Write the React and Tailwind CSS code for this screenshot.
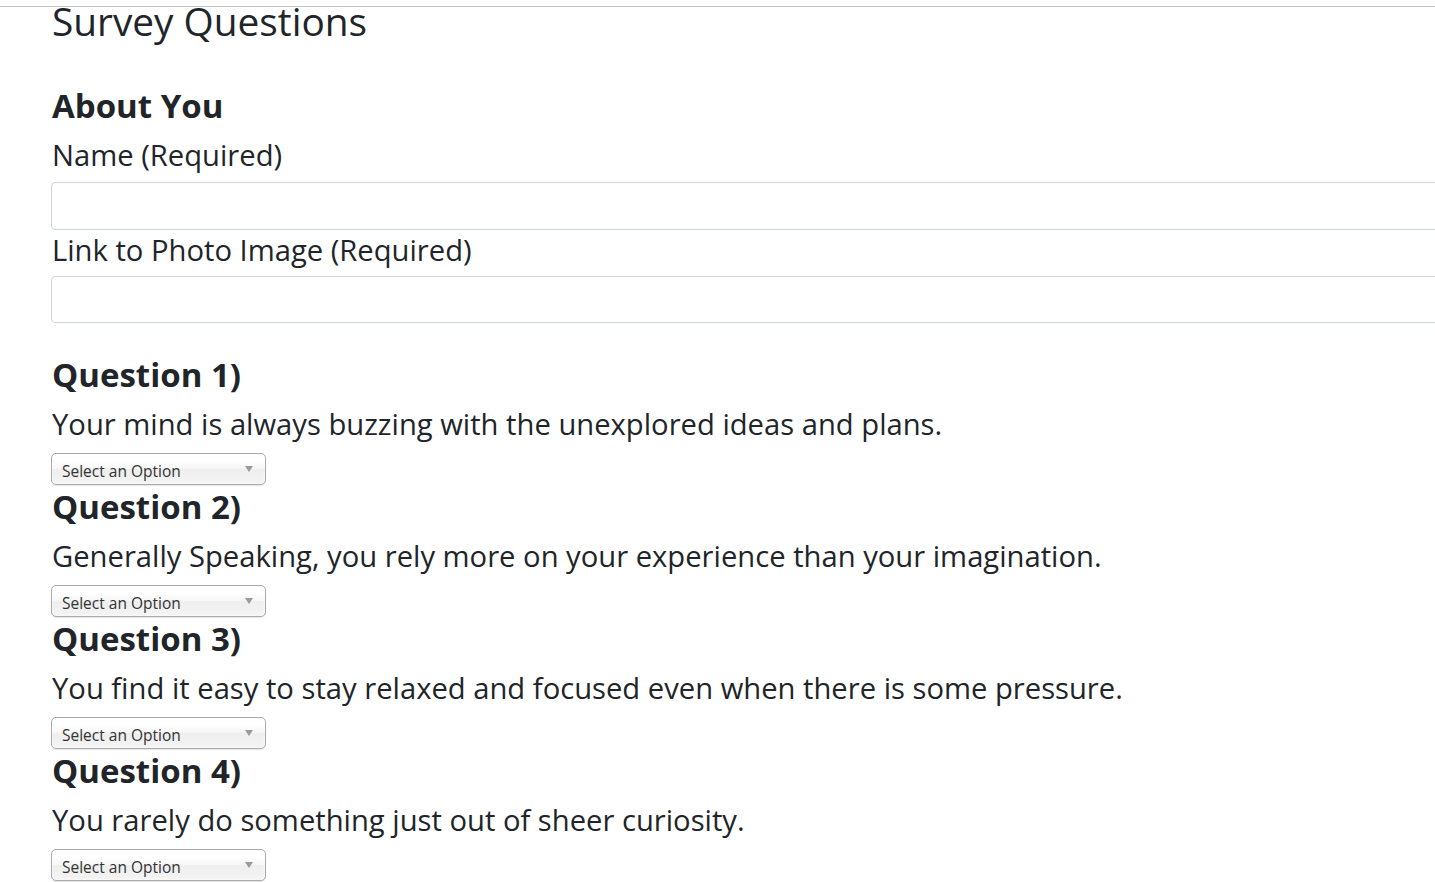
import React from "react"

const questions = [
  "Your mind is always buzzing with the unexplored ideas and plans.",
  "Generally Speaking, you rely more on your experience than your imagination.",
  "You find it easy to stay relaxed and focused even when there is some pressure.",
  "You rarely do something just out of sheer curiosity.",
]

function ChosenSelect() {
  return (
    <div className="-ml-[1px] mt-[11px] flex h-[32px] w-[215px] items-center justify-between rounded-[5px] border border-[#aaaaaa] bg-[linear-gradient(#ffffff_20%,#f6f6f6_50%,#eeeeee_52%,#f4f4f4_100%)] pl-[10px] pr-[12px] shadow-[inset_0_0_3px_#fff,0_1px_1px_rgba(0,0,0,0.1)]">
      <span className="pt-[6px] text-[15.5px] leading-none text-[#333333]">Select an Option</span>
      <svg width="8" height="6" viewBox="0 0 8 6">
        <path d="M0 0 L8 0 L4 6 Z" fill="#9a9a9a" />
      </svg>
    </div>
  )
}

function Question({ num, text, first }) {
  return (
    <div className={first ? "mt-[32px]" : "mt-[2px]"}>
      <h3 className="text-[33px] font-bold leading-[40px]">Question {num})</h3>
      <p className="mt-[11px] text-[29.2px] leading-[36px]">{text}</p>
      <ChosenSelect />
    </div>
  )
}

export default function App() {
  return (
    <div
      className="min-h-screen overflow-hidden bg-white text-[#212529]"
      style={{ fontFamily: '"Open Sans", "Noto Sans", sans-serif' }}
    >
      <div className="h-[7px] border-b border-[#c4c4c4]" />
      <div className="pl-[52px]">
        <h1 className="text-[38.8px] leading-[28px]">Survey Questions</h1>
        <h3 className="mt-[51px] text-[33px] font-bold leading-[40px]">About You</h3>
        <label className="mt-[11px] block text-[29.2px] leading-[36px]">Name (Required)</label>
        <div className="-ml-[1px] mt-[9px] h-[48px] w-[1500px] rounded-[4px] border border-[#ced4da] bg-white" />
        <label className="mt-[2px] block text-[29.2px] leading-[36px]">Link to Photo Image (Required)</label>
        <div className="-ml-[1px] mt-[8px] h-[47px] w-[1500px] rounded-[4px] border border-[#ced4da] bg-white" />
        {questions.map((q, i) => (
          <Question key={i} num={i + 1} text={q} first={i === 0} />
        ))}
      </div>
    </div>
  )
}
